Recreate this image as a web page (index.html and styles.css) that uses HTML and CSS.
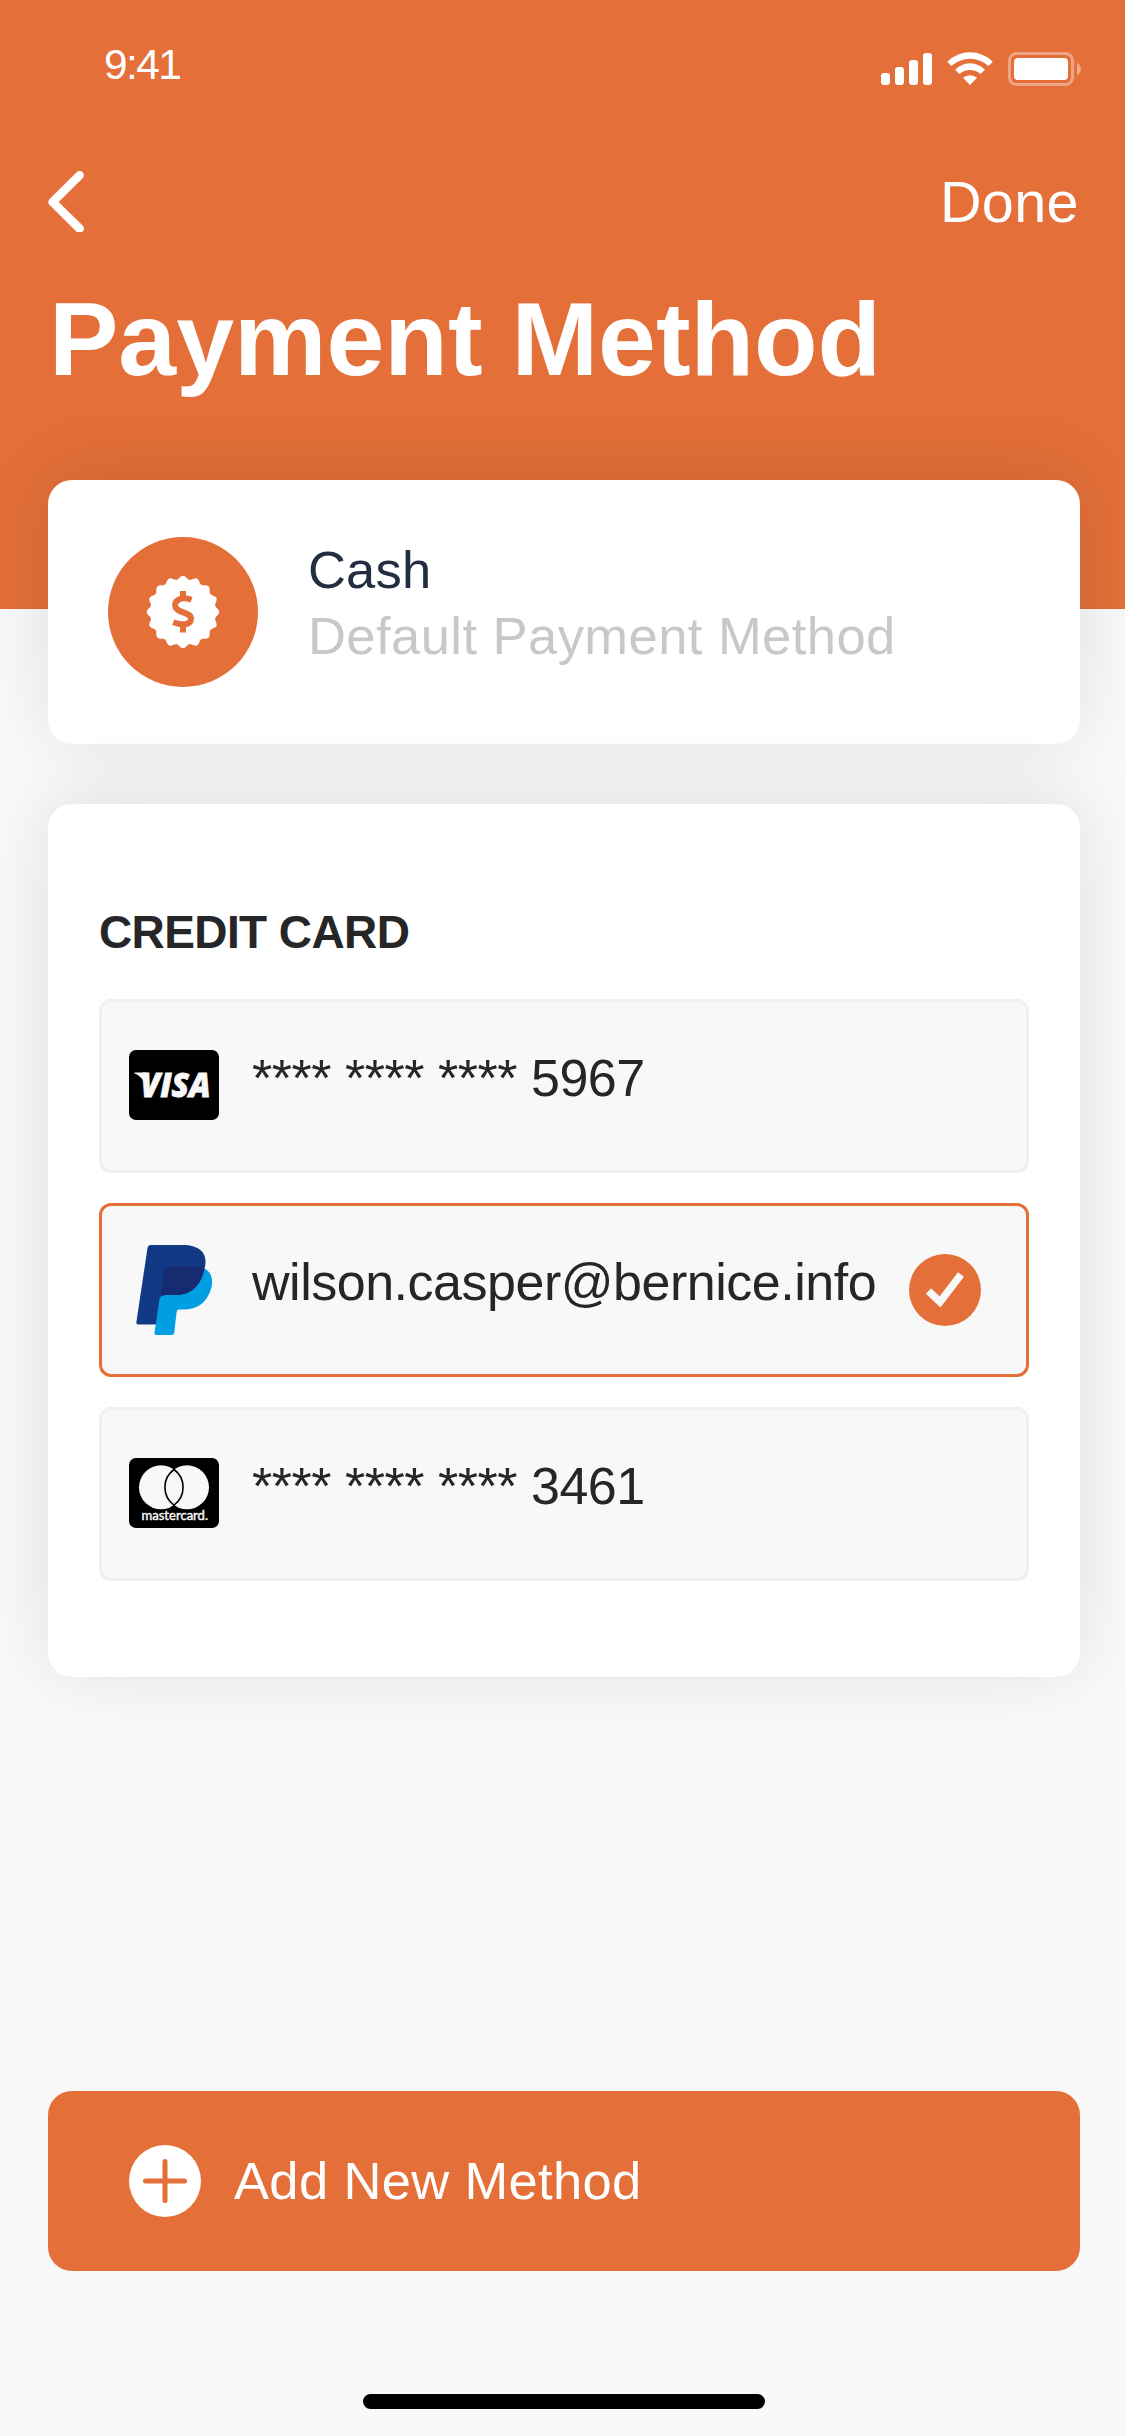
FILE: index.html
```html
<!DOCTYPE html>
<html lang="en">
<head>
<meta charset="utf-8">
<title>Payment Method</title>
<link rel="stylesheet" href="styles.css">
</head>
<body>
<div class="screen">
  <header class="header">
    <div class="status">
      <span class="time">9:41</span>
      <svg class="status-icons" viewBox="0 0 200 34" width="200" height="34">
        <g fill="#fff">
          <rect x="0" y="21" width="9" height="12" rx="3"/>
          <rect x="14" y="15" width="9" height="18" rx="3"/>
          <rect x="28" y="8" width="9" height="25" rx="3"/>
          <rect x="42" y="1" width="9" height="32" rx="3"/>
          <path d="M66.300 9.700A32.300 32.300 0 0 1 111.800 9.700L107.500 14A27.400 27.400 0 0 0 70.500 14Z"/>
          <path d="M74.100 17.700A20.300 20.300 0 0 1 103.900 17.700L99.500 22A15.800 15.800 0 0 0 78.500 22Z"/>
          <path d="M82 25.800A11 11 0 0 1 96 25.800L89 32.900Z"/>
          <rect x="133" y="6" width="54" height="22" rx="4"/>
        </g>
        <rect x="128.500" y="1.500" width="63" height="31" rx="7" fill="none" stroke="#fff" stroke-opacity=".38" stroke-width="3"/>
        <path d="M196 11C201.300 13 201.300 21 196 23Z" fill="#fff" fill-opacity=".42"/>
      </svg>
    </div>
    <div class="nav">
      <svg class="back" viewBox="0 0 36 62" width="36" height="62"><path d="M31.600 5.200L4.600 32L31.600 58.600" fill="none" stroke="#fff" stroke-width="8.600" stroke-linecap="round" stroke-linejoin="round"/></svg>
      <span class="done">Done</span>
    </div>
    <h1 class="title">Payment Method</h1>
  </header>

  <main class="content">
    <section class="card cash">
      <svg class="cash-icon" viewBox="0 0 150 150" width="150" height="150">
        <circle cx="75" cy="75" r="75" fill="#e46f39"/>
        <g fill="#fff" id="seal"></g>
        <path d="M83.500 62.700Q79.500 61.200 75.800 61.300C70 61.500 66.500 65 67.200 69.300C68.300 76 83 75 83 81.600C83 88.500 74 88.500 65.200 85.200M75 54V62M75 87V95.500" fill="none" stroke="#e46f39" stroke-width="6"/>
      </svg>
      <div class="cash-text">
        <div class="name">Cash</div>
        <div class="note">Default Payment Method</div>
      </div>
    </section>

    <section class="card methods">
      <h2 class="heading">CREDIT CARD</h2>
      <div class="row">
        <svg class="brand" viewBox="0 0 90 90" width="90" height="90">
          <rect y="9" width="90" height="70" rx="7"/>
          <text class="visa" x="11.500" y="55.500" textLength="70" lengthAdjust="spacingAndGlyphs">VISA</text>
          <path d="M5.500 31.500H17L15 41Q11 34 5.500 32.500Z" fill="#f8f8f8"/>
        </svg>
        <span class="number">**** **** **** 5967</span>
      </div>
      <div class="row selected">
        <svg class="brand" viewBox="0 0 90 90" width="90" height="90">
          <path d="M22 0H56C74 1 79 11 75.500 24L60 55L28 79.500H9.500Q7 79.500 7.400 77L18.500 3Q19 0 22 0Z" fill="#123984"/>
          <path d="M75.500 23.500C86 29 84 42 79.500 50C75 59 67 64 57 64.500H50Q48 64.500 47.600 67L45.300 87.500Q45 90 42.500 90H27.500Q25 90 25.500 87.500L30.500 54Q31 50.500 35 50.500L50 42Z" fill="#009ee3"/>
          <path d="M39 21.500H68Q73 21.500 75.500 23.500C73 39 63 50 48 50H35Q31.500 50 31 54L35.500 24.500Q36 21.500 39 21.500Z" fill="#172c70"/>
        </svg>
        <span class="number">wilson.casper@bernice.info</span>
        <svg class="check" viewBox="0 0 72 72" width="72" height="72"><circle cx="36" cy="36" r="36" fill="#e46f39"/><path d="M19.500 37L31 48L52 20.500" fill="none" stroke="#f8f8f8" stroke-width="7.500"/></svg>
      </div>
      <div class="row">
        <svg class="brand" viewBox="0 0 90 90" width="90" height="90">
          <rect y="9" width="90" height="70" rx="7"/>
          <circle cx="32" cy="38.300" r="22" fill="#f8f8f8"/>
          <circle cx="58" cy="38.300" r="22" fill="#f8f8f8"/>
          <path d="M45 20.500A22 22 0 0 1 45 56.100A22 22 0 0 1 45 20.500Z" fill="#f8f8f8" stroke="#000" stroke-width="1.600"/>
          <text class="mc" x="12.500" y="70.600" textLength="66.500" lengthAdjust="spacingAndGlyphs">mastercard.</text>
        </svg>
        <span class="number">**** **** **** 3461</span>
      </div>
    </section>

    <div class="add">
      <svg class="plus" viewBox="0 0 72 72" width="72" height="72"><circle cx="36" cy="36" r="36" fill="#fff"/><path d="M36 16.500V55.500M16.500 36H55.500" fill="none" stroke="#e46f39" stroke-width="5" stroke-linecap="round"/></svg>
      <span>Add New Method</span>
    </div>
    <div class="home"></div>
  </main>
</div>
<script src="seal.js"></script>
</body>
</html>
```
FILE: seal.js
```js
// Scalloped seal: radius swings around 34.5 over sixteen lobes.
var points = [];
for (var i = 0; i < 320; i++) {
  var a = i / 320 * Math.PI * 2;
  var r = 34.5 + 1.7 * Math.cos(16 * a);
  points.push((75 + r * Math.sin(a)).toFixed(2) + ',' + (75 - r * Math.cos(a)).toFixed(2));
}
var shape = document.createElementNS('http://www.w3.org/2000/svg', 'polygon');
shape.setAttribute('points', points.join(' '));
document.getElementById('seal').appendChild(shape);
```
FILE: styles.css
```css
* { box-sizing: border-box; }
body { margin: 0; background: #f9f9f9; font-family: "Liberation Sans", Arial, sans-serif; }
.screen { width: 1125px; height: 2436px; overflow: hidden; }
.header { height: 609px; padding: 0 46px 0 48px; background: #e46f39; color: #fff; }
.status { height: 138px; display: flex; justify-content: space-between; padding: 41px 0 0 56px; }
.time { font-size: 42.500px; line-height: 48px; letter-spacing: -1.6px; }
.status-icons { margin-top: 11px; margin-right: -2px; }
.nav { height: 130px; display: flex; justify-content: space-between; padding-top: 32px; }
.done { font-size: 57.500px; line-height: 65px; letter-spacing: 0.4px; }
.title { margin: 11px 0 0 1px; font-size: 104px; line-height: 120px; letter-spacing: 0; font-weight: 700; white-space: nowrap; }
.content { padding: 0 45px 0 48px; margin-top: -129px; }
.card { background: #fff; border-radius: 24px; box-shadow: 0 -6px 72px rgba(0, 0, 0, .11); }
.cash { height: 264px; padding: 57px 60px; display: flex; gap: 50px; }
.cash-text { font-size: 52.500px; line-height: 66px; white-space: nowrap; }
.name { color: #242e42; letter-spacing: 0.2px; }
.note { color: #c8c7cc; letter-spacing: 0.45px; }
.methods { height: 873px; margin-top: 60px; padding: 102px 51px 0; display: flex; flex-direction: column; gap: 30px; }
.heading { margin: 0 0 10px; font-size: 46px; line-height: 53px; letter-spacing: -0.6px; color: #262628; }
.row { height: 174px; flex: none; display: flex; align-items: flex-start; background: #f8f8f8; border: 3px solid #efeff4; border-radius: 12px; padding: 38px 27px 0; }
.selected { border-color: #e46f39; }
.brand { flex: none; margin-top: 1px; }
.number { width: 657px; margin: 8px 0 0 33px; flex: none; font-size: 52px; line-height: 60px; letter-spacing: -0.48px; color: #262628; white-space: nowrap; }
.check { flex: none; margin-top: 10px; }
.visa { font: italic 800 34px "Open Sans", sans-serif; fill: #f8f8f8; stroke: #f8f8f8; stroke-width: .8px; }
.mc { font: 400 12.500px Lato, sans-serif; fill: #f8f8f8; stroke: #f8f8f8; stroke-width: .4px; }
.add { height: 180px; margin-top: 414px; border-radius: 24px; background: #e46f39; color: #fff; display: flex; align-items: center; gap: 33px; padding: 0 81px; font-size: 52.500px; letter-spacing: 0.35px; }
.add span { margin-top: -1px; }
.home { width: 402px; height: 15px; margin: 123px auto 0; border-radius: 8px; background: #000; }
```
